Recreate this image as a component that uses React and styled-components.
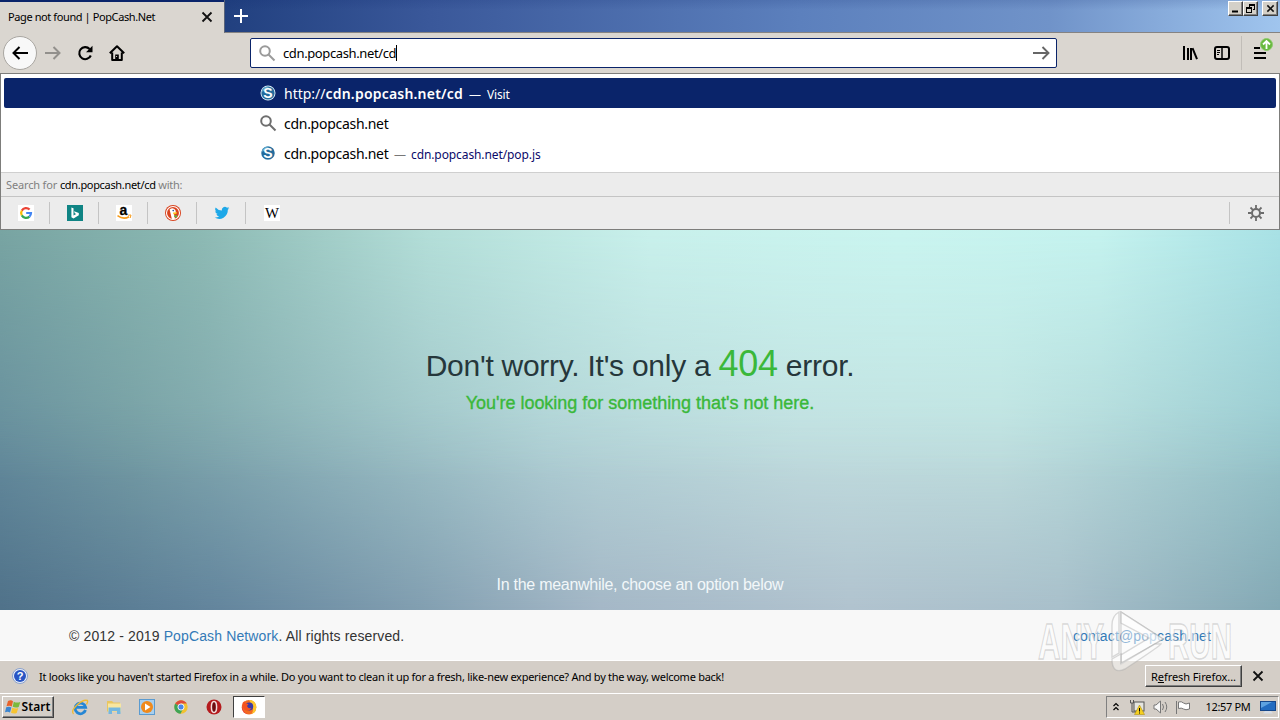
import styled, { createGlobalStyle, css } from 'styled-components'

const GlobalStyle = createGlobalStyle`
  * {
    box-sizing: border-box;
  }

  body {
    margin: 0;
    width: 1280px;
    height: 720px;
    overflow: hidden;
    font-family: 'Noto Sans', 'Open Sans', sans-serif;
    font-size: 11px;
    color: #000;
  }
`

const Screen = styled.div`
  position: relative;
  display: flex;
  flex-direction: column;
  width: 1280px;
  height: 720px;
  overflow: hidden;
`

const Text = styled.span`
  white-space: pre;
  font-size: ${p => p.$size || 11}px;
  font-weight: ${p => p.$bold ? 600 : 400};
  letter-spacing: ${p => p.$space || 0}px;
  color: ${p => p.$color || 'inherit'};
`

const Icon = styled.svg`
  display: block;
  flex: none;
  overflow: visible;
`

/* ---------- tab strip ---------- */

const TabStrip = styled.div`
  display: flex;
  height: 33px;
  background: linear-gradient(#0a246a22, #0a246a00 30%), linear-gradient(90deg, #0c266c 0, #21407f 224px, #3a589a 430px, #5c80bd 800px, #7093c9 1050px, #a0c5ee 1280px);
`

const Tab = styled.div`
  display: flex;
  align-items: center;
  justify-content: space-between;
  width: 224px;
  padding: 0 12px 2px 8px;
  border-top: 2px solid #0a246a;
  background: #dad6d0;
`

const StripRest = styled.div`
  display: flex;
  flex: 1;
  justify-content: space-between;
  border-left: 1px solid #5a6479;
  border-bottom: 1px solid #858382;
  padding: 9px 2px 0 9px;
`

const WindowButtons = styled.div`
  display: flex;
  margin-top: -8px;
`

const WinButton = styled.div`
  display: flex;
  width: ${p => p.$wide ? 16 : 15}px;
  height: 15px;
  margin-left: ${p => p.$gap || 0}px;
  align-items: center;
  justify-content: center;
  background: #d4d0c8;
  border: 1px solid;
  border-color: #fff #404040 #404040 #fff;
  box-shadow: inset -1px -1px #808080;
`

/* ---------- toolbar ---------- */

const Toolbar = styled.div`
  display: flex;
  align-items: center;
  height: 40px;
  padding-left: 3px;
  background: #dad6d0;
`

const BackButton = styled.div`
  display: flex;
  align-items: center;
  justify-content: center;
  width: 34px;
  height: 34px;
  border: 1px solid #a9a6a1;
  border-radius: 50%;
  background: #f8f8f8;
`

const NavIcons = styled.div`
  display: flex;
  align-items: center;
  gap: 16px;
  width: 213px;
  padding-left: 8px;
`

const UrlBar = styled.div`
  display: flex;
  align-items: center;
  width: 807px;
  height: 30px;
  padding: 0 6px 0 8px;
  border: 1px solid #0a246a;
  border-radius: 2px;
  background: #fff;
`

const UrlText = styled.div`
  display: flex;
  align-items: center;
  flex: 1;
  padding-left: 8px;
`

const Caret = styled.span`
  width: 1px;
  height: 16px;
  background: #000;
`

const ToolIcons = styled.div`
  display: flex;
  flex: 1;
  align-items: center;
  justify-content: flex-end;
  height: 40px;
  gap: 16px;
`

const MenuBox = styled.div`
  position: relative;
  display: flex;
  align-items: center;
  height: 34px;
  width: 39px;
  margin-left: -5px;
  padding-left: 12px;
  border-left: 1px solid #c1bdb8;
`

const UpdateBadge = styled(Icon)`
  position: absolute;
  left: 18px;
  top: 2px;
`

/* ---------- suggestions ---------- */

const Popup = styled.div`
  display: flex;
  flex-direction: column;
  height: 157px;
  border: 1px solid #7d7d7b;
  background: #fff;
`

const Results = styled.div`
  height: 98px;
  padding: 4px 3px 0;
`

const Result = styled.div`
  display: flex;
  align-items: center;
  height: 30px;
  padding-left: 256px;
  border-radius: 2px;
  ${p => p.$selected && css`
    background: #0a246a;
    color: #fff;
  `}
`

const ResultText = styled.div`
  display: flex;
  align-items: baseline;
  padding-left: 8px;
`

const SearchWith = styled.div`
  display: flex;
  align-items: center;
  height: 24px;
  padding-left: 5px;
  border-top: 1px solid #cfcfcf;
  background: #ececec;
`

const Engines = styled.div`
  display: flex;
  align-items: center;
  justify-content: space-between;
  flex: 1;
  border-top: 1px solid #c4c4c4;
  background: #ececec;
`

const EngineList = styled.div`
  display: flex;
`

const Engine = styled.div`
  display: flex;
  align-items: center;
  justify-content: center;
  width: 49px;
  height: 22px;
  padding-left: 2px;
  border-right: ${p => p.$last ? 'none' : '1px solid #c4c4c4'};
`

const Settings = styled(Engine)`
  width: 50px;
  border-right: none;
  border-left: 1px solid #c4c4c4;
`

/* ---------- page ---------- */

const Page = styled.div`
  position: relative;
  isolation: isolate;
  height: 380px;
  display: flex;
  flex-direction: column;
  align-items: center;
  font-family: 'Liberation Sans', Arial, sans-serif;
  background: linear-gradient(90deg, #50728a 0, #64869e 220px, #829fb1 420px, #a5b8c7 600px, #b1c3cf 850px, #a9c0cb 1060px, #84a9b5 1280px);

  &::before,
  &::after {
    content: '';
    position: absolute;
    inset: 0;
    z-index: -1;
  }

  &::before {
    background: linear-gradient(90deg, #668d9e 0, #769ea5 130px, #92b7bd 330px, #b0d1d5 550px, #c1dedf 800px, #c0e0df 1000px, #99c7cc 1280px);
    mask-image: linear-gradient(#000 45%, #000c 60%, transparent);
  }

  &::after {
    background: linear-gradient(90deg, #78a4a2 0, #8cb9b3 200px, #b3ded8 430px, #c8f0eb 650px, #c9f4ef 900px, #c4f2ee 1100px, #a8e1e5 1280px);
    mask-image: linear-gradient(#000, #0008 32%, transparent 66%);
  }
`

const Title = styled.h1`
  margin: 113px 0 0;
  height: 41px;
  font-size: 30px;
  font-weight: 400;
  line-height: 41px;
  letter-spacing: -0.26px;
  color: #26373b;
  white-space: pre;
`

const Code = styled.span`
  font-size: 36px;
  color: #3ab83a;
`

const Subtitle = styled.p`
  margin: 8px 0 0;
  font-size: 18px;
  line-height: 22px;
  letter-spacing: -0.02px;
  color: #3ab83a;
  -webkit-text-stroke: 0.35px #3ab83a;
`

const Hint = styled.p`
  margin: 161px 0 0;
  font-size: 16px;
  line-height: 20px;
  letter-spacing: -0.28px;
  color: #f2f7f9;
`

const Footer = styled.div`
  display: flex;
  align-items: center;
  justify-content: space-between;
  height: 51px;
  padding: 2px 69px 0;
  background: #f8f8f8;
  border-bottom: 1px solid #fff;
  font-family: 'Liberation Sans', Arial, sans-serif;
  font-size: 14px;
  letter-spacing: 0.13px;
  color: #333;
`

const Link = styled.a`
  color: #337ab7;
`

/* ---------- notification + taskbar ---------- */

const Notification = styled.div`
  display: flex;
  align-items: center;
  height: 32px;
  padding: 0 17px 2px 12px;
  background: #d4cec7;
`

const NotificationText = styled.div`
  flex: 1;
  padding-left: 11px;
`

const RaisedButton = styled.div`
  display: flex;
  align-items: center;
  justify-content: center;
  width: ${p => p.$width}px;
  height: 22px;
  border: 1px solid;
  border-color: #fff #404040 #404040 #fff;
  box-shadow: inset -1px -1px #808080;
  background: #d4cec7;
`

const Taskbar = styled.div`
  display: flex;
  align-items: center;
  height: 27px;
  padding: 0 1px 1px 2px;
  border-top: 1px solid #fff;
  background: #d4cec7;
`

const QuickLaunch = styled.div`
  display: flex;
  align-items: center;
  flex: 1;
  padding-left: 18px;
  gap: 17.5px;
`

const ActiveApp = styled.div`
  display: flex;
  align-items: center;
  justify-content: center;
  width: 32px;
  height: 22px;
  margin-left: -7px;
  border: 1px solid;
  border-color: #404040 #fff #fff #404040;
  background: #fff;
`

const Tray = styled.div`
  display: flex;
  align-items: center;
  width: 173px;
  height: 22px;
  padding: 0 2px 0 6px;
  border: 1px solid;
  border-color: #808080 #fff #fff #808080;
`

const Clock = styled.div`
  flex: 1;
  text-align: center;
  padding-left: 6px;
`

const Watermark = styled.svg`
  position: absolute;
  left: 1030px;
  top: 604px;
`

function Glass({ color = '#777', size = 16 }) {
  return (
    <Icon width={size} height={size} viewBox="0 0 16 16" fill="none" stroke={color} strokeWidth="2">
      <circle cx="6" cy="6" r="4.8" />
      <path d="M9.5 9.5l6 6" />
    </Icon>
  )
}

function Cross({ size = 10, width = 1.8 }) {
  return (
    <Icon width={size} height={size} viewBox="0 0 10 10" stroke="#111" strokeWidth={width}>
      <path d="M.5.5l9 9M9.5.5l-9 9" />
    </Icon>
  )
}

function PopCashIcon({ ring }) {
  return (
    <Icon width="16" height="16" viewBox="0 0 16 16">
      <circle cx="8" cy="8" r={ring ? 7.5 : 6.8} fill={ring ? '#e1f1fa' : '#a7cbe0'} />
      <circle cx="8" cy="8" r="6.6" fill="#246c9d" />
      <path d="M1.5 7a6.6 6.6 0 0 1 8-5.4L6 5z" fill="#62a6c9" />
      <text x="8" y="13" textAnchor="middle" fill="#fff" fontFamily="Liberation Sans" fontWeight="700" fontSize="14">S</text>
    </Icon>
  )
}

const engines = [
  <Icon key="google" width="16" height="16" viewBox="0 0 16 16" fill="none" strokeWidth="2.2">
    <rect width="16" height="16" fill="#fff" />
    <path d="M11.6 4.6A4.9 4.9 0 0 0 3.8 5.6" stroke="#ea4335" />
    <path d="M3.8 5.6a4.9 4.9 0 0 0 0 4.8" stroke="#fbbc05" />
    <path d="M3.8 10.4a4.9 4.9 0 0 0 7.6 1.2" stroke="#34a853" />
    <path d="M11.4 11.6A4.9 4.9 0 0 0 13 8H8.2" stroke="#4285f4" />
  </Icon>,
  <Icon key="bing" width="16" height="16" viewBox="0 0 16 16">
    <rect width="16" height="16" fill="#0f8484" />
    <path d="M4.4 2.5l2.1.8v7.2l2.7-1.6-1.4-.7-.8-2 4.8 1.7v2.4l-5.3 3.2-2.1-1.2z" fill="#fff" />
  </Icon>,
  <Icon key="amazon" width="16" height="16" viewBox="0 0 16 16">
    <rect width="16" height="16" fill="#fff" />
    <text x="7.5" y="9.5" textAnchor="middle" fontFamily="Liberation Sans" fontWeight="700" fontSize="14" stroke="#000" strokeWidth=".3">a</text>
    <path d="M1.5 10.7q6 4.2 11.5 1" fill="none" stroke="#f79c1d" strokeWidth="1.6" />
    <path d="M12 10.2l3-.2-.8 3" fill="none" stroke="#f79c1d" />
  </Icon>,
  <Icon key="duck" width="16" height="16" viewBox="0 0 16 16">
    <circle cx="8" cy="8" r="8" fill="#d9431e" />
    <circle cx="8" cy="8" r="6.5" fill="#d9431e" stroke="#fff" strokeWidth="1.1" />
    <path d="M4.6 4.4Q8 1.8 10.400 5l.6 3-2 1.200 1 4.500q-2 .6-3.200 0z" fill="#fff" />
    <path d="M8.200 7.600l4-.3-1 1.600-3 .4z" fill="#fdc217" />
    <path d="M9 10.800l3-.8v2.500l-2.800-.5z" fill="#5fb346" />
    <circle cx="8.200" cy="5.600" r=".8" fill="#264e91" />
  </Icon>,
  <Icon key="twitter" width="16" height="16" viewBox="0 0 24 24">
    <path fill="#1da8e8" d="M23 4.9a9 9 0 0 1-2.6.7 4.5 4.5 0 0 0 2-2.5 9 9 0 0 1-2.9 1.1 4.5 4.5 0 0 0-7.7 4.1A12.8 12.8 0 0 1 2.5 3.6a4.5 4.5 0 0 0 1.4 6 4.5 4.5 0 0 1-2-.5 4.5 4.5 0 0 0 3.6 4.5 4.5 4.5 0 0 1-2 .1 4.5 4.5 0 0 0 4.2 3.1A9 9 0 0 1 1 18.7 12.8 12.8 0 0 0 20.7 7.3 9 9 0 0 0 23 4.9z" />
  </Icon>,
  <Icon key="wikipedia" width="16" height="16" viewBox="0 0 16 16">
    <rect width="16" height="16" fill="#fff" />
    <text x="8" y="12.5" textAnchor="middle" fontFamily="Liberation Serif" fontSize="14" textLength="14" lengthAdjust="spacingAndGlyphs">W</text>
  </Icon>,
]

function Browser() {
  return (
    <>
      <TabStrip>
        <Tab>
          <Text $space={-0.4}>Page not found | PopCash.Net</Text>
          <Cross />
        </Tab>
        <StripRest>
          <Icon width="14" height="14" viewBox="0 0 14 14" stroke="#fff" strokeWidth="2">
            <path d="M7 0v14M0 7h14" />
          </Icon>
          <WindowButtons>
            <WinButton>
              <Icon width="9" height="9"><rect x="1" y="6.5" width="6" height="2" /></Icon>
            </WinButton>
            <WinButton>
              <Icon width="9" height="9" fill="none" stroke="#000" shapeRendering="crispEdges">
                <path d="M3.5 3V.5h5v5H6.5M3 1.5h6M.5 3.5h5v5h-5zM0 4.5h6" />
              </Icon>
            </WinButton>
            <WinButton $wide $gap={4}><Cross size={7} width={2.2} /></WinButton>
          </WindowButtons>
        </StripRest>
      </TabStrip>
      <Toolbar>
        <BackButton>
          <Icon width="16" height="14" viewBox="0 0 16 14" fill="none" stroke="#000" strokeWidth="2">
            <path d="M16 7H1.5M7.5 1l-6 6 6 6" />
          </Icon>
        </BackButton>
        <NavIcons>
          <Icon width="16" height="14" viewBox="0 0 16 14" fill="none" stroke="#92908c" strokeWidth="2">
            <path d="M0 7h14.5M8.5 1l6 6-6 6" />
          </Icon>
          <Icon width="16" height="16" viewBox="0 0 16 16" fill="none" stroke="#000" strokeWidth="2.1">
            <path d="M13.8 10.5A6 6 0 1 1 12.600 4" />
            <path d="M15.500.8v6.500H9z" fill="#000" stroke="none" />
          </Icon>
          <Icon width="16" height="16" viewBox="0 0 16 16" fill="none" stroke="#000" strokeWidth="2" strokeLinejoin="round">
            <path d="M.8 8.2L8 1.2l7.2 7M3.2 7.5V15h9.6V7.5" />
            <path d="M6.2 15V9.5h3.6V15z" fill="#000" stroke="none" />
            <path d="M7.6 11v1" stroke="#dad6d0" strokeWidth="1" />
          </Icon>
        </NavIcons>
        <UrlBar>
          <Glass color="#9a9a9a" />
          <UrlText>
            <Text $size={13} $space={-0.38}>cdn.popcash.net/cd</Text>
            <Caret />
          </UrlText>
          <Icon width="17" height="14" viewBox="0 0 17 14" fill="none" stroke="#666" strokeWidth="1.9">
            <path d="M0 7h15.5M9.5 1l6 6-6 6" />
          </Icon>
        </UrlBar>
        <ToolIcons>
          <Icon width="16" height="14" viewBox="0 0 16 14" stroke="#000" strokeWidth="2">
            <path d="M2 0v14M6 2v12M9 2v12M10.5 2.2l4.5 11" />
          </Icon>
          <Icon width="16" height="14" viewBox="0 0 16 14" fill="none" stroke="#000" strokeWidth="2">
            <rect x="1" y="1" width="14" height="12" rx="2" />
            <path d="M8 1v12" strokeWidth="1.5" />
            <path d="M3 4.5h3M3 6.5h3M3 8.5h2" strokeWidth="1" />
          </Icon>
          <MenuBox>
            <Icon width="13" height="12" viewBox="0 0 13 12" stroke="#000" strokeWidth="2">
              <path d="M0 1h6M0 6h12M0 11h12" />
            </Icon>
            <UpdateBadge width="13" height="13" viewBox="0 0 13 13">
              <circle cx="6.5" cy="6.5" r="6" fill="#68b93e" stroke="#8fca70" />
              <path d="M6.5 11V3M3 6.5L6.5 3 10 6.5" fill="none" stroke="#fff" strokeWidth="1.8" />
            </UpdateBadge>
          </MenuBox>
        </ToolIcons>
      </Toolbar>
      <Popup>
        <Results>
          <Result $selected>
            <PopCashIcon ring />
            <ResultText>
              <Text $size={14}>http://</Text>
              <Text $size={14} $space={0.2} $bold>cdn.popcash.net/cd</Text>
              <Text $size={12} $space={-0.12}>  —  Visit</Text>
            </ResultText>
          </Result>
          <Result>
            <Glass color="#6e6e6e" />
            <ResultText><Text $size={14} $space={-0.28}>cdn.popcash.net</Text></ResultText>
          </Result>
          <Result>
            <PopCashIcon />
            <ResultText>
              <Text $size={14} $space={-0.28}>cdn.popcash.net</Text>
              <Text $size={12} $space={-0.4} $color="#777">  —  </Text>
              <Text $size={12} $space={-0.1} $color="#0a0a6a">cdn.popcash.net/pop.js</Text>
            </ResultText>
          </Result>
        </Results>
        <SearchWith>
          <Text $space={-0.15} $color="#808080">Search for </Text>
          <Text $space={-0.32}>cdn.popcash.net/cd</Text>
          <Text $space={-0.25} $color="#808080"> with:</Text>
        </SearchWith>
        <Engines>
          <EngineList>
            {engines.map((icon, i) => (
              <Engine key={icon.key} $last={i === engines.length - 1}>{icon}</Engine>
            ))}
          </EngineList>
          <Settings>
            <Icon width="16" height="16" viewBox="0 0 16 16" fill="none" stroke="#6b6b6b" strokeWidth="2">
              <circle cx="8" cy="8" r="4" />
              <path d="M8 0v3.5M8 12.5V16M0 8h3.5M12.5 8H16M2.5 2.5l2.3 2.3M11.2 11.2l2.3 2.3M13.5 2.5l-2.3 2.3M4.8 11.2l-2.3 2.3" strokeWidth="1.8" />
            </Icon>
          </Settings>
        </Engines>
      </Popup>
    </>
  )
}

function ErrorPage() {
  return (
    <>
      <Page>
        <Title>Don't worry. It's only a <Code>404</Code> error.</Title>
        <Subtitle>You're looking for something that's not here.</Subtitle>
        <Hint>In the meanwhile, choose an option below</Hint>
      </Page>
      <Footer>
        <span>© 2012 - 2019 <Link>PopCash Network</Link>. All rights reserved.</span>
        <Link>contact@popcash.net</Link>
      </Footer>
      <Notification>
        <Icon width="16" height="16" viewBox="0 0 16 16">
          <circle cx="8" cy="8" r="7.5" fill="#e9eef8" stroke="#8ba2cc" />
          <circle cx="8" cy="8" r="6" fill="#2855c4" />
          <text x="8" y="12" textAnchor="middle" fill="#fff" fontFamily="Liberation Sans" fontWeight="700" fontSize="11">?</text>
        </Icon>
        <NotificationText>
          <Text $space={-0.265}>It looks like you haven't started Firefox in a while. Do you want to clean it up for a fresh, like-new experience? And by the way, welcome back!</Text>
        </NotificationText>
        <RaisedButton $width={97}>
          <Text $space={-0.08}>R<u>e</u>fresh Firefox...</Text>
        </RaisedButton>
        <Icon width="21" height="10" viewBox="-11 0 21 10" stroke="#111" strokeWidth="1.8">
          <path d="M.5.5l9 9M9.5.5l-9 9" />
        </Icon>
      </Notification>
    </>
  )
}

function Desktop() {
  return (
    <Taskbar>
      <RaisedButton $width={52}>
        <Icon width="16" height="16" viewBox="0 0 16 16">
          <path d="M3 2q3-1.5 5 .3L6.8 7.4Q4.5 6 1.5 7.2z" fill="#e8622a" />
          <path d="M8.8 2.7q3 1.6 6.500.2l-1.600 5q-3 1.200-6-.2z" fill="#7bb93c" />
          <path d="M1.2 8.2q3-1.2 5.2.2L5 13.5Q2.8 12 0 13.2z" fill="#3b85d0" />
          <path d="M7.3 8.8q3 1.3 6 .2l-1.600 5q-3 1.200-5.700-.3z" fill="#f7c431" />
        </Icon>
        <Text $size={12} $space={0.1} $bold>Start</Text>
      </RaisedButton>
      <QuickLaunch>
        <Icon width="16" height="16" viewBox="0 0 16 16" fill="none">
          <path d="M13.5 11A5.300 5.300 0 1 1 13.600 8.300H4.500" stroke="#2586d4" strokeWidth="2.800" />
          <path d="M1.500 15Q-1.500 12 5 6T15.500 1.500q.8 1.500-1 4" stroke="#efba32" strokeWidth="1.400" />
        </Icon>
        <Icon width="16" height="16" viewBox="0 0 16 16">
          <path d="M1 2h5l1.5 1.500H14v9H1z" fill="#e9c660" />
          <path d="M2 4.500h13v8H2z" fill="#f8e6a0" />
          <path d="M2.500 8.500h12V15H11v-3H6v3H2.500z" fill="#75b7df" />
        </Icon>
        <Icon width="16" height="16" viewBox="0 0 16 16">
          <rect x=".5" y=".5" width="15" height="15" fill="#a8cfee" stroke="#5b9bd0" />
          <circle cx="8" cy="8" r="6" fill="#f08a1c" />
          <path d="M6 4.5v7l5.5-3.5z" fill="#fff" />
        </Icon>
        <Icon width="16" height="16" viewBox="0 0 16 16">
          <circle cx="8" cy="8" r="6.7" fill="#f2c230" />
          <path d="M8 8L2.2 4.6A6.7 6.7 0 0 0 7.5 14.7L10.5 9z" fill="#3fa456" />
          <path d="M8 8L2.2 4.6A6.7 6.7 0 0 1 13.8 4.6H8z" fill="#de4a3b" />
          <circle cx="8" cy="8" r="3.1" fill="#4a87e8" stroke="#fff" strokeWidth=".9" />
        </Icon>
        <Icon width="16" height="16" viewBox="0 0 16 16">
          <circle cx="8" cy="8" r="7.5" fill="#b51b1e" />
          <ellipse cx="8" cy="8" rx="2.6" ry="5.5" fill="#6d0c10" stroke="#f2dede" strokeWidth="1.5" />
        </Icon>
        <ActiveApp>
          <Icon width="16" height="16" viewBox="0 0 16 16">
            <circle cx="8" cy="8.3" r="7.3" fill="#f26a21" />
            <path d="M8 1q7 0 7.3 7a7 7 0 0 1-5 7q3-4 1-8T8 1z" fill="#fdc52e" />
            <path d="M1 5q0 9 6 10.3A7 7 0 0 1 1 9z" fill="#e22850" />
            <circle cx="8.3" cy="7.5" r="3.9" fill="#3c3aa6" />
            <path d="M1.5 4l2-2 1 2.5 3 .5-1.5 2q1 3 4.500 2-2 3.500-5.500 2.500T1.500 4z" fill="#f5521f" />
          </Icon>
        </ActiveApp>
      </QuickLaunch>
      <Tray>
        <Icon width="6" height="8" viewBox="0 0 6 8" fill="none" stroke="#000" strokeWidth="1.2">
          <path d="M.5 3L3 .5 5.500 3M.5 7L3 4.500 5.500 7" />
        </Icon>
        <Icon width="40" height="16" viewBox="-10 0 40 16">
          <rect x="5" y="3" width="10" height="9" fill="#e5e5e0" stroke="#555" />
          <path d="M1.5 1v3h3V1M3 4v9h4" stroke="#555" fill="none" />
          <path d="M10.5 6l5 9.5h-10z" fill="#f5cf20" stroke="#a78500" strokeWidth=".5" />
          <path d="M10.5 9v3.500M10.5 13.500v1" stroke="#000" />
          <path d="M25 6h2l4.500-4v12l-4.500-4h-2z" fill="#f8f8f8" stroke="#777" />
        </Icon>
        <Icon width="31" height="16" viewBox="0 0 31 16" fill="none" stroke="#777">
          <path d="M3.5 5q2 3 0 6M6 3q3.500 5 0 10" />
          <path d="M17.500 2v13M19.500 3q3-1 5 1t6 0v6q-4 1.500-6 0t-5-.5z" fill="#fff" />
        </Icon>
        <Clock><Text $space={-0.35}>12:57 PM</Text></Clock>
        <Icon width="16" height="14" viewBox="0 0 16 14">
          <rect x=".5" y="1.5" width="15" height="9" fill="#236cc0" stroke="#16478a" />
          <path d="M1 2h11L1 8z" fill="#5ea2e0" />
          <path d="M5 11h6l2 2.500H3z" fill="#d8dde5" />
        </Icon>
      </Tray>
    </Taskbar>
  )
}

function AnyRun() {
  return (
    <Watermark width="240" height="76" viewBox="0 0 240 76" fill="#ffffff78" stroke="#a4a4a466" strokeWidth="1.4" fontFamily="Liberation Sans Narrow, Liberation Sans" fontWeight="700" fontSize="50">
      <text x="8" y="55" textLength="66" lengthAdjust="spacingAndGlyphs">ANY</text>
      <text x="138" y="55" textLength="64" lengthAdjust="spacingAndGlyphs">RUN</text>
      <path d="M91 8v52l42-25z" />
      <path d="M91 8v11l28 15-28 17v9l42-25z" />
      <path d="M82 21q0-9 7-13v41l-7 4z" />
      <path d="M82 55l9-5v9l34-19 6 0q-1 2-36 25-13 6-13-10z" />
    </Watermark>
  )
}

export default function App() {
  return (
    <Screen>
      <GlobalStyle />
      <Browser />
      <ErrorPage />
      <Desktop />
      <AnyRun />
    </Screen>
  )
}
